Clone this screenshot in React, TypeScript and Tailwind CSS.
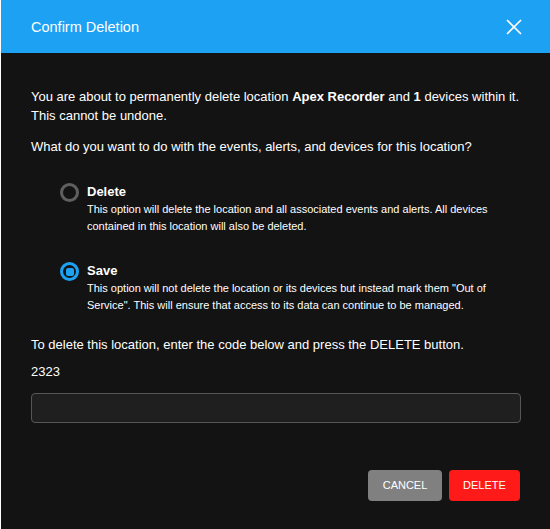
import { X } from "lucide-react";

const options = [
  {
    id: "delete",
    label: "Delete",
    text: "This option will delete the location and all associated events and alerts. All devices contained in this location will also be deleted.",
  },
  {
    id: "save",
    label: "Save",
    text: 'This option will not delete the location or its devices but instead mark them "Out of Service". This will ensure that access to its data can continue to be managed.',
  },
];

function Radio({ checked }: { checked: boolean }) {
  if (checked) {
    return (
      <span className="mt-px flex h-[19px] w-[19px] shrink-0 items-center justify-center rounded-full border-[3px] border-[#1da1f2]">
        <span className="h-[8px] w-[8px] rounded-[2px] bg-[#1da1f2]" />
      </span>
    );
  }
  return <span className="mt-px h-[19px] w-[19px] shrink-0 rounded-full border-[3px] border-[#5f5f5f]" />;
}

export default function App() {
  const selected = "save";
  return (
    <div className="min-h-screen bg-white font-['Liberation_Sans',Arial,sans-serif]">
      <div className="ml-px flex h-[529px] w-[549px] flex-col bg-[#131313] text-white">
        <div className="flex h-[53px] shrink-0 items-center justify-between bg-[#1da1f2] pl-[30px] pr-[23px]">
          <h1 className="pt-[3px] text-[14.5px]">Confirm Deletion</h1>
          <X className="h-[26px] w-[26px]" strokeWidth={1.6} />
        </div>

        <div className="flex flex-1 flex-col pl-[30px] pr-[26px] pt-[34px] text-[13px] leading-[19px]">
          <p>
            You are about to permanently delete location <b>Apex Recorder</b> and <b>1</b> devices within it. This
            cannot be undone.
          </p>
          <p className="mt-[12px]">What do you want to do with the events, alerts, and devices for this location?</p>

          <div className="mt-[26px] flex flex-col gap-[26px] pl-[29px]">
            {options.map((o) => (
              <label key={o.id} className="flex gap-[8px]">
                <Radio checked={o.id === selected} />
                <div className="pr-[10px]">
                  <div className="text-[13px] font-bold leading-[19px]">{o.label}</div>
                  <div className="text-[11px] leading-[17px]">{o.text}</div>
                </div>
              </label>
            ))}
          </div>

          <p className="mt-[21px]">To delete this location, enter the code below and press the DELETE button.</p>
          <p className="mt-[8px]">2323</p>
          <input
            type="text"
            className="mt-[12px] h-[30px] w-[490px] rounded-[4px] border border-[#565656] bg-[#1f1f1f] px-2 text-[13px] text-white outline-none"
          />

          <div className="mt-[47px] flex w-[489px] justify-end gap-[7px]">
            <button className="h-[31px] w-[74px] rounded-[4px] bg-[#808080] text-[11px] uppercase">Cancel</button>
            <button className="h-[31px] w-[71px] rounded-[4px] bg-[#ff1a1a] text-[11px] uppercase">Delete</button>
          </div>
        </div>
      </div>
    </div>
  );
}
